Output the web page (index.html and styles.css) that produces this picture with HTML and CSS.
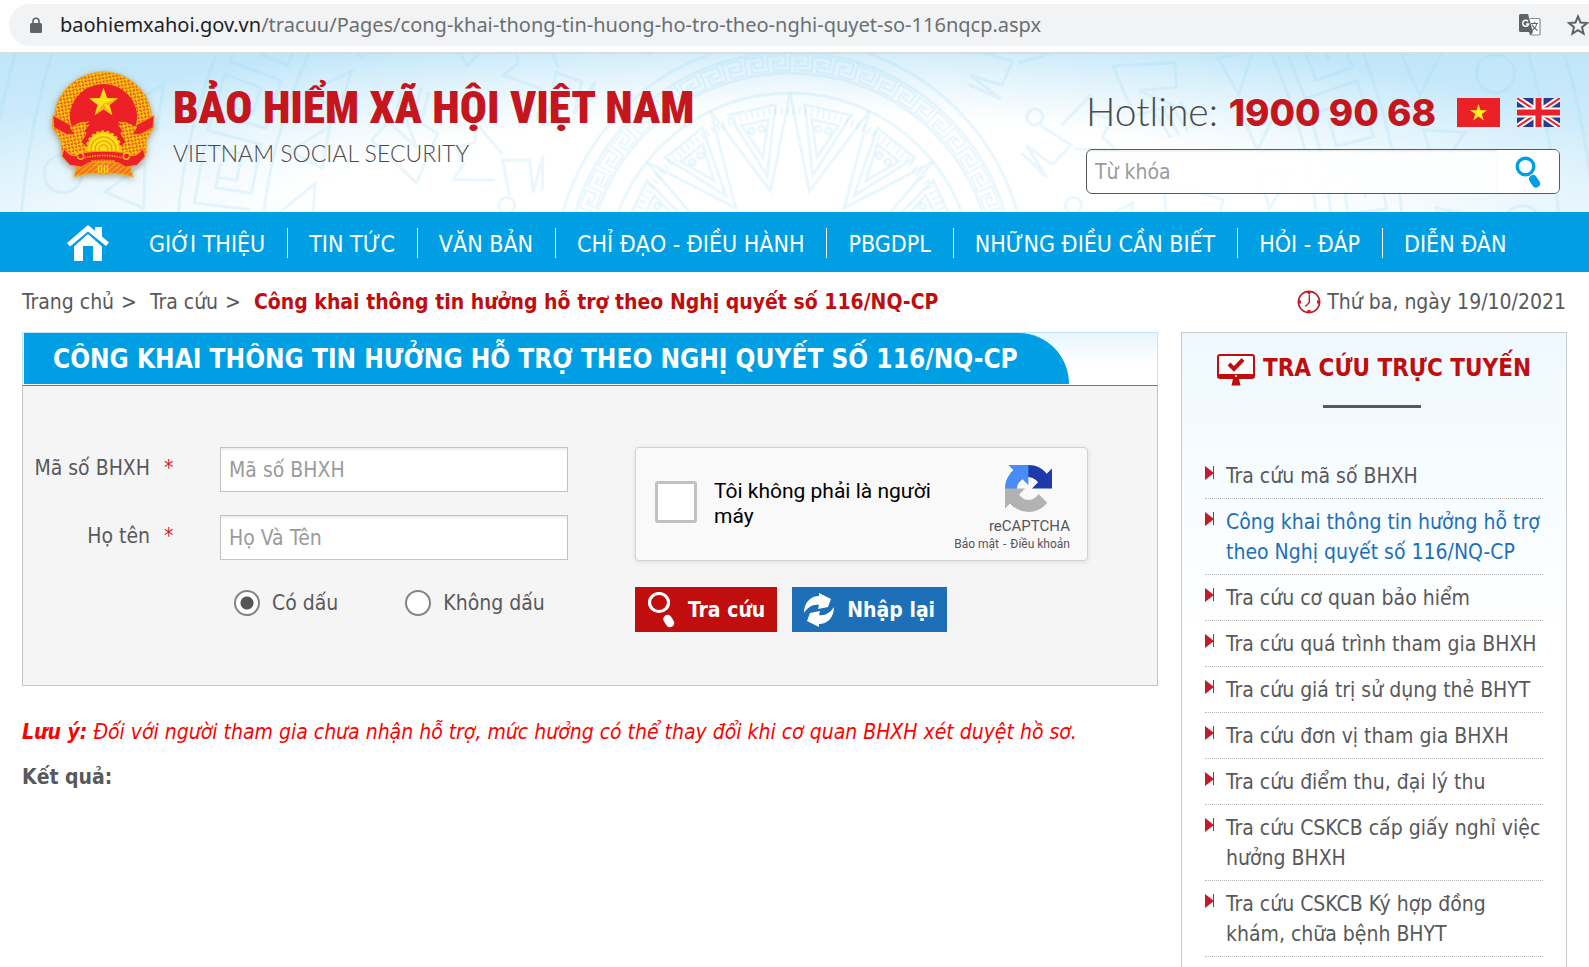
FILE: index.html
```
<!DOCTYPE html>
<html lang="vi">
<head>
<meta charset="utf-8">
<title>Bảo hiểm xã hội Việt Nam</title>
<link rel="stylesheet" href="styles.css">
</head>
<body>
<div class="urlbar">
  <div class="urlbar-pill">
    <svg class="lock" viewBox="0 0 12 16"><path d="M3 7V4.200a3 3 0 0 1 6 0V7" fill="none" stroke="#5f6368" stroke-width="1.600"/><rect y="6" width="12" height="10" rx="1.500" fill="#5f6368"/></svg>
    <span class="url"><b>baohiemxahoi.gov.vn</b>/tracuu/Pages/cong-khai-thong-tin-huong-ho-tro-theo-nghi-quyet-so-116nqcp.aspx</span>
    <button class="bar-btn" type="button" aria-label="Dịch trang">
      <svg width="22" height="22" viewBox="0 0 22 22"><path d="M11 4.500h9a1 1 0 0 1 1 1V20a1 1 0 0 1-1 1h-7l-3-4" fill="#fff" stroke="#8a8d91" stroke-width="1.200"/><path d="M1.500 0H9l5 18H1.500A1.500 1.500 0 0 1 0 16.500v-15A1.500 1.500 0 0 1 1.500 0z" fill="#5f6368"/><path d="M9 7.400a3 3 0 1 0 .6 2.600H7" fill="none" stroke="#fff" stroke-width="1.500"/><path d="M12 9.500h7M15.500 8v1.500M17.800 9.500c-.6 3-2.600 5.500-5.300 7M13 10.500c1 2.500 3 4.500 5.500 6" fill="none" stroke="#5f6368" stroke-width="1.100"/><path d="M10 18l4 0-2.800 3.500z" fill="#5f6368"/></svg>
    </button>
    <button class="bar-btn" type="button" aria-label="Đánh dấu trang">
      <svg width="22" height="22" viewBox="0 0 22 22"><path d="M11 2.500l2.500 6 6.500.5-5 4.200 1.600 6.400L11 16.200l-5.600 3.400L7 13.200 2 9l6.500-.5z" fill="none" stroke="#5f6368" stroke-width="2"/></svg>
    </button>
  </div>
</div>

<header class="site-header">
  <svg class="drum" viewBox="0 0 1589 158" preserveAspectRatio="xMidYMid slice" aria-hidden="true"><g id="drum"></g></svg>
  <a class="brand" href="#">
    <svg class="emblem" viewBox="0 0 104 108" role="img" aria-label="Quốc huy Việt Nam">
      <defs>
        <pattern id="grain" width="5" height="5" patternUnits="userSpaceOnUse" patternTransform="rotate(35)"><rect width="5" height="5" fill="#f9c80e"/><ellipse cx="1.300" cy="1.300" rx="1.700" ry=".9" fill="#e8401c"/><ellipse cx="3.800" cy="3.800" rx=".9" ry="1.600" fill="#e8401c"/></pattern>
        <pattern id="cloth" width="4" height="4" patternUnits="userSpaceOnUse" patternTransform="rotate(-40)"><rect width="4" height="4" fill="#f3701e"/><rect width="4" height="1.500" fill="#f9a51a"/></pattern>
      </defs>
      <path d="M52 1C26 1 4 22 3 44c-3 4-3 10-2 14l8 12 1 13 13 10 58 0 14-10 0-13 7-12c1-5 1-10-2-14C99 22 78 1 52 1z" fill="url(#grain)" stroke="#f0a91a"/>
      <path d="M52 13C34 13 19 27 18 45c0 9 4 18 11 25l10 12h26l10-12c7-7 11-16 11-25C85 27 70 13 52 13z" fill="#ec2027"/>
      <path d="M1 45l17 9 6 10-9 0L2 57zM103 45l-17 9-6 10 9 0 13-7z" fill="#ec2027" stroke="#f39a1b" stroke-width=".8"/>
      <path d="M18 57l10-5 10-1-5 4 5-1-5 6 2 3-6 10zM86 57l-10-5-10-1 5 4-5-1 5 6-2 3 6 10z" fill="url(#grain)"/>
      <path d="M52 17l3.700 10.200 10.800.4-8.500 6.700 3 10.400L52 38.500l-9 6.200 3-10.400-8.500-6.700 10.800-.4z" fill="#fee116"/>
      <path d="M52 17v16l6 1.300 8.500-6.700L52 33l9 11.700-9-6.200-9 6.200L52 33z" fill="#f6b315"/>
      <circle cx="52" cy="78" r="16.500" fill="#fee116" stroke="#fcc713" stroke-width="3" stroke-dasharray="3 2"/>
      <g fill="none" stroke="#f29a1b" stroke-width="1.300"><circle cx="52" cy="79" r="12.500"/><circle cx="52" cy="79" r="8.500"/><circle cx="52" cy="79" r="4.500"/></g>
      <path d="M26 92h52l4 15c-9-3-17-4-25-3H47c-8-1-16 0-25 3z" fill="url(#cloth)" stroke="#f4c01a" stroke-width=".8"/>
      <path d="M12 78c6 9 12 9 16 5 6-1 14-2 24-2s18 1 24 2c4 4 10 4 16-5l2 8-8 9-12 2-6-4c-12-2-21-2-32 0l-6 4-12-2-8-9z" fill="#ec2027" stroke="#f49c1b"/>
      <path d="M47 95v8M50 95v8M53 95v8M56 95v8" stroke="#fddb14" stroke-width="1.500"/>
      <path d="M24 86c3-5 8-4 8 0s-6 4-6 0M80 86c-3-5-8-4-8 0s6 4 6 0" fill="none" stroke="#f9b51a" stroke-width="1.500"/>
      <path d="M33 87.500c12-3 26-3 38 0" fill="none" stroke="#f7a51b" stroke-width="1.600" stroke-dasharray="1.500 1"/>
      <path d="M40 91.500c8-1 16-1 24 0" fill="none" stroke="#f7a51b" stroke-width="2.600" stroke-dasharray="2 1"/>
    </svg>
    <span class="brand-text">
      <strong class="brand-name">BẢO HIỂM XÃ HỘI VIỆT NAM</strong>
      <span class="brand-sub">VIETNAM SOCIAL SECURITY</span>
    </span>
  </a>
  <div class="header-side">
    <div class="hotline">
      <span class="hotline-text">Hotline: <b>1900 90 68</b></span>
      <a class="flag" href="#" aria-label="Tiếng Việt"><svg width="43" height="29" viewBox="0 0 43 29"><rect width="43" height="29" fill="#ec2027"/><path d="M21.500 6l2 6.200h6.500l-5.200 3.900 2 6.300-5.300-3.900-5.300 3.900 2-6.300-5.200-3.900h6.500z" fill="#fff215"/></svg></a>
      <a class="flag" href="#" aria-label="English"><svg width="43" height="29" viewBox="0 0 43 29"><rect width="43" height="29" fill="#2b3a8f"/><path d="M0 0l43 29M43 0L0 29" stroke="#fff" stroke-width="6"/><path d="M0 0l43 29M43 0L0 29" stroke="#ec2027" stroke-width="2"/><path d="M21.500 0v29M0 14.500h43" stroke="#fff" stroke-width="10"/><path d="M21.500 0v29M0 14.500h43" stroke="#ec2027" stroke-width="6"/></svg></a>
    </div>
    <form class="search">
      <input type="search" placeholder="Từ khóa" aria-label="Từ khóa">
      <button type="button" aria-label="Tìm kiếm"><svg width="26" height="32" viewBox="0 0 26 32"><circle cx="10.500" cy="10.500" r="8.300" fill="none" stroke="#009fe3" stroke-width="3.400"/><path d="M18 23l3 4.500" stroke="#009fe3" stroke-width="8" stroke-linecap="round"/></svg></button>
    </form>
  </div>
</header>

<nav class="main-nav">
  <a class="home" href="#" aria-label="Trang chủ"><svg width="42" height="36" viewBox="0 0 42 36"><path d="M21 0l7 5.800V2h7v9.500l7 6-3 3.500L21 6.500 3 21.500l-3-3.500z" fill="#fff"/><path d="M21 9l14 12.500V36h-9V21H16v15H7V21.500z" fill="#fff"/></svg></a>
  <a class="nav-link" href="#">GIỚI THIỆU</a>
  <a class="nav-link" href="#">TIN TỨC</a>
  <a class="nav-link" href="#">VĂN BẢN</a>
  <a class="nav-link" href="#">CHỈ ĐẠO - ĐIỀU HÀNH</a>
  <a class="nav-link" href="#">PBGDPL</a>
  <a class="nav-link" href="#">NHỮNG ĐIỀU CẦN BIẾT</a>
  <a class="nav-link" href="#">HỎI - ĐÁP</a>
  <a class="nav-link" href="#">DIỄN ĐÀN</a>
</nav>

<div class="crumb-row">
  <div class="crumbs">
    <a href="#">Trang chủ</a><span class="crumb-sep">&gt;</span><a href="#">Tra cứu</a><span class="crumb-sep">&gt;</span><a class="crumb-current" href="#">Công khai thông tin hưởng hỗ trợ theo Nghị quyết số 116/NQ-CP</a>
  </div>
  <div class="today">
    <svg width="24" height="24" viewBox="0 0 24 24"><circle cx="12" cy="12" r="10.600" fill="none" stroke="#c21b2c" stroke-width="1.700"/><path d="M12 1v3M12 20v3M1 12h3M20 12h3" stroke="#c21b2c" stroke-width="3"/><path d="M12.300 4.500v8L8.300 16.500" fill="none" stroke="#c21b2c" stroke-width="1.400"/></svg>
    <span>Thứ ba, ngày 19/10/2021</span>
  </div>
</div>

<div class="page">
  <main class="content">
    <section class="panel">
      <div class="panel-head"><h1>CÔNG KHAI THÔNG TIN HƯỞNG HỖ TRỢ THEO NGHỊ QUYẾT SỐ 116/NQ-CP</h1></div>
      <form class="panel-body">
        <div class="fields">
          <label for="code">Mã số BHXH</label><span class="required">*</span>
          <input class="field" id="code" type="text" placeholder="Mã số BHXH">
          <label for="name">Họ tên</label><span class="required">*</span>
          <input class="field" id="name" type="text" placeholder="Họ Và Tên">
          <div class="radios">
            <label><input type="radio" name="accent" checked>Có dấu</label>
            <label><input type="radio" name="accent">Không dấu</label>
          </div>
        </div>
        <div class="actions-col">
          <div class="captcha">
            <input type="checkbox" id="human">
            <label for="human">Tôi không phải là người máy</label>
            <div class="captcha-brand">
              <svg width="47" height="47" viewBox="0 0 64 64"><path d="M64 31.955l-.033-1.370V4.687l-7.160 7.160C50.948 4.674 42.033.093 32.050.093c-10.400 0-19.622 4.960-25.458 12.640l11.736 11.860a15.550 15.550 0 0 1 4.754-5.334c2.050-1.600 4.952-2.906 8.968-2.906.485 0 .860.057 1.135.163 4.976.393 9.288 3.140 11.828 7.124l-8.307 8.307L64 31.953" fill="#1c3aa9"/><path d="M31.862.094l-1.370.033H4.594l7.160 7.160C4.580 13.147 0 22.060 0 32.046c0 10.400 4.960 19.622 12.640 25.458L24.500 45.768a15.550 15.550 0 0 1-5.334-4.754c-1.600-2.050-2.906-4.952-2.906-8.968 0-.485.057-.860.163-1.135.393-4.976 3.140-9.288 7.124-11.828l8.307 8.307L31.860.095" fill="#4a8cf5"/><path d="M.001 32.045l.033 1.370v25.898l7.160-7.160c5.860 7.173 14.774 11.754 24.760 11.754 10.400 0 19.622-4.960 25.458-12.640l-11.736-11.860a15.550 15.550 0 0 1-4.754 5.334c-2.050 1.600-4.952 2.906-8.968 2.906-.485 0-.860-.057-1.135-.163-4.976-.393-9.288-3.140-11.828-7.124l8.307-8.307c-10.522.040-22.400.066-27.295-.005" fill="#b2b2b2"/></svg>
              <span class="captcha-name">reCAPTCHA</span>
              <span class="captcha-links"><a href="#">Bảo mật</a> <span class="dash">-</span> <a href="#">Điều khoản</a></span>
            </div>
          </div>
          <div class="buttons">
            <button class="btn btn-red" type="button"><svg width="28" height="36" viewBox="0 0 28 36"><ellipse cx="12" cy="10.500" rx="9.500" ry="9" fill="none" stroke="#fff" stroke-width="3.200"/><path d="M20.500 27l2.500 4" stroke="#fff" stroke-width="8.500" stroke-linecap="round"/></svg>Tra cứu</button>
            <button class="btn btn-blue" type="button"><svg width="30" height="34" viewBox="0 0 30 34"><path d="M0 20C0 9 7 3 15 3L15 0 L27 6 24 14 14 16l1-4C9 11 4 14 0 20z" fill="#fff"/><path d="M30 14c0 11-7 17-15 17l0 3L3 28l3-8 10-2-1 4c6 1 11-2 15-8z" fill="#fff"/></svg>Nhập lại</button>
          </div>
        </div>
      </form>
    </section>
    <p class="note"><b>Lưu ý:</b> Đối với người tham gia chưa nhận hỗ trợ, mức hưởng có thể thay đổi khi cơ quan BHXH xét duyệt hồ sơ.</p>
    <p class="result">Kết quả:</p>
  </main>

  <aside class="sidebar">
    <h2><svg width="38" height="32" viewBox="0 0 38 32"><rect x="1" y="1" width="36" height="23" rx="2" fill="#fff" stroke="#c00d0d" stroke-width="2"/><path d="M1 20h36v2a2 2 0 0 1-2 2H3a2 2 0 0 1-2-2zM16 25h6l1.500 6.500h-9z" fill="#c00d0d"/><path d="M12 10l5 5 9-9.500" fill="none" stroke="#c00d0d" stroke-width="4"/><circle cx="19" cy="22" r="1" fill="#fff"/></svg>TRA CỨU TRỰC TUYẾN</h2>
    <ul>
      <li><a href="#">Tra cứu mã số BHXH</a></li>
      <li class="active"><a href="#">Công khai thông tin hưởng hỗ trợ theo Nghị quyết số 116/NQ-CP</a></li>
      <li><a href="#">Tra cứu cơ quan bảo hiểm</a></li>
      <li><a href="#">Tra cứu quá trình tham gia BHXH</a></li>
      <li><a href="#">Tra cứu giá trị sử dụng thẻ BHYT</a></li>
      <li><a href="#">Tra cứu đơn vị tham gia BHXH</a></li>
      <li><a href="#">Tra cứu điểm thu, đại lý thu</a></li>
      <li><a href="#">Tra cứu CSKCB cấp giấy nghỉ việc hưởng BHXH</a></li>
      <li><a href="#">Tra cứu CSKCB Ký hợp đồng khám, chữa bệnh BHYT</a></li>
    </ul>
  </aside>
</div>
<script src="drum.js"></script>
</body>
</html>
```
FILE: styles.css
```
* { box-sizing: border-box; }
body {
  margin: 0;
  min-height: 100vh;
  display: flex;
  flex-direction: column;
  background: #fff;
  color: #58595b;
  font: 21px/30px "DejaVu Sans Condensed", "DejaVu Sans", sans-serif;
  overflow-x: hidden;
}
a { color: inherit; text-decoration: none; }
svg { display: block; flex: none; }
button { border: 0; padding: 0; background: none; font: inherit; cursor: pointer; }

.urlbar { padding: 4px 0 6px 9px; border-bottom: 2px solid #dadbdd; }
.urlbar-pill {
  display: flex;
  align-items: center;
  height: 42px;
  padding-left: 21px;
  border-radius: 21px 0 0 21px;
  background: #f1f3f4;
}
.lock { width: 12px; height: 16px; margin-right: 18px; }
.url { flex: 1; min-width: 0; color: #6b6f73; font: 20px/42px "Noto Sans", sans-serif; white-space: nowrap; overflow: hidden; }
.url b { color: #202124; font-weight: 400; }
.bar-btn { margin-left: 26px; }

.site-header {
  position: relative;
  display: flex;
  justify-content: space-between;
  height: 158px;
  padding: 17px 29px 0 52px;
  background:
    radial-gradient(ellipse 58% 130% at 50% 110%, #fff 55%, rgba(255, 255, 255, 0) 100%),
    linear-gradient(#bfe6f9, #def2fc);
}
.drum { position: absolute; inset: 0; width: 100%; height: 100%; }
.drum g { fill: none; stroke: #8fd3f6; stroke-opacity: .19; stroke-width: 3; }
.brand { position: relative; display: flex; gap: 18px; }
.emblem { width: 103px; height: 107px; filter: drop-shadow(0 2px 3px rgba(90, 70, 40, .5)); }
.brand-text { padding-top: 11px; }
.brand-name { display: block; color: #c4161c; font: 900 45px/52px "Roboto Condensed", Roboto, sans-serif; white-space: nowrap; }
.brand-sub { display: block; padding-top: 5px; color: #4a4b4d; font: 300 23px/28px Lato, sans-serif; white-space: nowrap; }
.header-side { position: relative; width: 474px; padding-top: 16px; }
.hotline { display: flex; align-items: center; gap: 17px; }
.hotline-text { flex: 1; color: #4a4b4d; font: 300 39px/48px Lato, sans-serif; white-space: nowrap; }
.hotline-text b { color: #c4161c; font: 800 37px/48px Inter, sans-serif; }
.search {
  display: flex;
  height: 45px;
  margin-top: 12px;
  border: 1px solid #58595b;
  border-radius: 6px;
  background: rgba(255, 255, 255, .9);
  overflow: hidden;
}
.search input { flex: 1; min-width: 0; padding: 0 8px; border: 0; outline: 0; background: transparent; font: inherit; box-shadow: inset 0 2px 2px rgba(0, 0, 0, .06); }
.search button { display: flex; align-items: center; justify-content: center; width: 62px; background: #fff; }
input::placeholder { color: #9b9b9b; opacity: 1; }

.main-nav { display: flex; align-items: center; height: 60px; padding: 2px 0 0 67px; background: #009fe3; color: #fff; }
.home { margin-right: 18px; }
.nav-link { padding: 2px 22px 0 21px; border-left: 1px solid #fff; font-size: 23px; line-height: 28px; white-space: nowrap; }
.home + .nav-link { border-left-color: transparent; }

.crumb-row { display: flex; justify-content: space-between; align-items: center; height: 60px; padding: 0 23px 0 22px; white-space: nowrap; }
.crumb-sep { margin: 0 13px 0 7px; }
.crumb-current { color: #c00d0d; font-weight: 700; }
.today { display: flex; align-items: center; gap: 6px; }

.page { flex: 1; display: grid; grid-template-columns: minmax(0, 1fr) 386px; gap: 23px; padding: 0 22px; }
.panel-head {
  border: 1px solid #bfe6f8;
  border-bottom: 1px solid #009fe3;
  padding: 0 0 1px 1px;
  background: linear-gradient(#e8f6fd, #fff 60%);
}
.panel-head h1 {
  width: fit-content;
  margin: 0;
  padding: 2px 51px 0 29px;
  border-top-right-radius: 50px 51px;
  background: #009fe3;
  color: #fff;
  font-size: 26px;
  line-height: 49px;
}
.panel-body {
  display: grid;
  grid-template-columns: minmax(0, 546fr) minmax(0, 523fr);
  gap: 67px;
  padding: 61px 0 53px;
  border: 1px solid #c4c4c4;
  border-top: 0;
  background: #f5f5f5;
}
.fields { display: grid; grid-template-columns: 127px 55px 1fr; grid-auto-rows: 45px; column-gap: 0; row-gap: 23px; align-content: start; line-height: 42px; }
.fields > label { text-align: right; }
.required { padding-left: 14px; color: #d0202c; }
.field { width: auto; min-width: 0; height: 45px; margin-left: 15px; padding: 0 8px; border: 1px solid #c2c2c2; border-radius: 0; background: #fff; box-shadow: inset 0 2px 2px rgba(0, 0, 0, .07); font: inherit; }
.radios { grid-column: 3; display: flex; gap: 67px; padding-left: 29px; }
.radios label { display: flex; align-items: center; gap: 12px; height: 40px; }
.radios input { appearance: none; width: 26px; height: 26px; margin: 0; border: 2px solid #848484; border-radius: 50%; background: #fff; }
.radios input:checked { background: radial-gradient(circle, #555 0 6px, #fff 7px); }

.captcha {
  display: flex;
  align-items: center;
  max-width: 453px;
  height: 114px;
  padding: 0 17px 0 19px;
  border: 1px solid #d3d3d3;
  border-radius: 4px;
  background: #f9f9f9;
  box-shadow: 0 1px 5px rgba(0, 0, 0, .1);
  color: #000;
  font-family: Roboto, sans-serif;
}
.captcha input { appearance: none; flex: none; width: 42px; height: 42px; margin: 0 17px 4px 0; border: 3px solid #c1c1c1; border-radius: 3px; background: #fff; }
.captcha label { flex: 1; line-height: 25px; }
.captcha-brand { display: flex; flex-direction: column; align-items: flex-end; padding-top: 9px; color: #555; }
.captcha-brand svg { margin-right: 18px; }
.captcha-name { margin-top: 5px; font-size: 15px; line-height: 18px; }
.captcha-links { font-size: 12px; line-height: 18px; }
.dash { margin: 0 1px; }
.buttons { display: flex; gap: 15px; margin-top: 26px; }
.btn { display: flex; align-items: center; gap: 13px; height: 45px; padding: 0 12px; color: #fff; font-weight: 700; white-space: nowrap; }
.btn-red { background: #c00d0d; }
.btn-blue { background: #1d70b8; }

.note { margin: 31px 0 0; color: #f00; font-style: italic; }
.result { margin: 15px 0 0; font-weight: 700; }

.sidebar { padding: 17px 23px 8px; border: 1px solid #c9cacc; border-bottom: 0; background: linear-gradient(#eff9ff, #fff 300px); }
.sidebar h2 { display: flex; justify-content: center; gap: 8px; margin: 0; color: #c00d0d; font-size: 24px; line-height: 36px; white-space: nowrap; }
.sidebar h2 svg { margin-top: 4px; }
.sidebar ul { margin: 19px 0 0; padding: 48px 0 0; list-style: none; background: linear-gradient(#58595b, #58595b) 49% 0 / 98px 3px no-repeat; }
.sidebar li { position: relative; padding: 8px 0 7px 21px; border-bottom: 1px dotted #b5b5b5; background: linear-gradient(#c21b2c, #c21b2c) 8px 13px / 1px 13px no-repeat; }
.sidebar li::before { content: ""; position: absolute; left: 0; top: 13px; border: solid transparent; border-width: 7px 0 7px 9px; border-left-color: #c21b2c; }
.sidebar li a { display: block; margin-right: -6px; }
.sidebar .active { color: #1d70b8; }
```
FILE: drum.js
```
// Bronze-drum ornament behind the header: concentric rings round one centre.
const NS = "http://www.w3.org/2000/svg";
const drum = document.getElementById("drum");
const CX = 790, CY = 222;

function point(r, deg) {
  const a = (deg - 90) * Math.PI / 180;
  return (CX + r * Math.cos(a)).toFixed(1) + " " + (CY + r * Math.sin(a)).toFixed(1);
}
function poly(points, close) {
  const p = document.createElementNS(NS, "path");
  p.setAttribute("d", "M" + points.map(([r, a]) => point(r, a)).join("L") + (close ? "Z" : ""));
  drum.append(p);
  return p;
}
function ring(r, dash, width) {
  const c = document.createElementNS(NS, "circle");
  c.setAttribute("cx", CX); c.setAttribute("cy", CY); c.setAttribute("r", r);
  if (dash) c.setAttribute("stroke-dasharray", dash);
  if (width) c.setAttribute("stroke-width", width);
  drum.append(c);
}
function disc(r, a, size) {
  const c = document.createElementNS(NS, "circle");
  const [x, y] = point(r, a).split(" ");
  c.setAttribute("cx", x); c.setAttribute("cy", y); c.setAttribute("r", size);
  drum.append(c);
}
function meander(r0, r1, step) {
  const h = r1 - r0, pts = [];
  for (let a = -90; a < 90; a += step) {
    pts.push([r0, a], [r1, a], [r1, a + step * .8], [r0 + h * .3, a + step * .8],
      [r0 + h * .3, a + step * .4], [r0 + h * .65, a + step * .4],
      [r0 + h * .65, a + step * .6], [r0 + h * .65, a + step * .25], [r0, a + step * .25]);
  }
  poly(pts).setAttribute("stroke-width", r0 > 400 ? 3 : 2);
}

const star = [];
for (let i = -4; i <= 4; i++) {
  const tip = i * 360 / 14, mid = tip + 180 / 14;
  star.push([183, tip], [87, mid]);
  poly([[172, mid - 8], [172, mid + 8], [103, mid]], true);
  poly([[158, mid - 5], [158, mid + 5], [122, mid]], true);
  disc(150, mid - 2, 3);
  disc(150, mid + 2, 3);
}
poly(star);
[183, 203, 224, 236, 771, 806].forEach(r => ring(r));
ring(165, "2 4", 8);
meander(206, 221, 6);
meander(545, 600, 7);
[530, 615].forEach(r => ring(r));
for (let a = -86; a <= 86; a += 12) disc(734, a + 4, 19);
for (let a = -84; a <= 84; a += 7) {
  poly([[650, a], [690, a + 1], [655, a + 4]], true);
  poly([[480, a], [515, a + 1], [484, a + 5]], true);
}
// Flying birds: beak, head, fan tail and wings.
for (let a = -76; a <= 80; a += 19) {
  disc(292, a, 8);
  poly([[292, a + 2], [310, a + 8], [285, a + 10], [270, a + 4], [275, a + 12], [262, a + 5]]);
  poly([[310, a + 4], [350, a + 2], [345, a + 5], [358, a + 7], [342, a + 9], [350, a + 12], [312, a + 9]]);
  poly([[385, a], [440, a + 4], [430, a + 7], [395, a + 5], [420, a + 9], [380, a + 8]], true);
  for (let k = 0; k < 4; k++) poly([[400 + k * 9, a + 9], [405 + k * 9, a + 13]]);
}
```
